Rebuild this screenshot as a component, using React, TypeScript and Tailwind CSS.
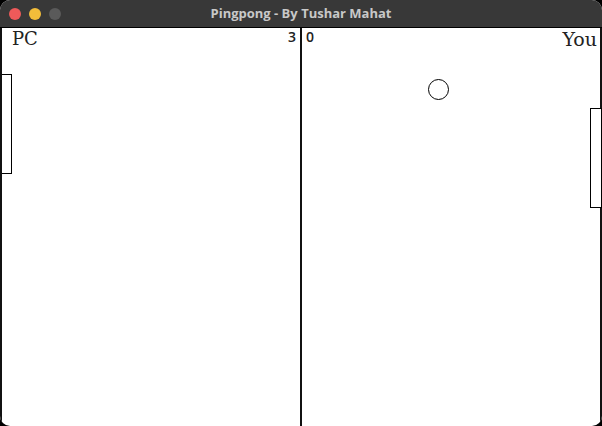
const serif = { fontFamily: '"DejaVu Serif", "Liberation Serif", serif' };
const sans = { fontFamily: '"Open Sans", "DejaVu Sans", sans-serif' };

export default function App() {
  return (
    <div className="w-[602px] h-[426px] bg-black">
      <div className="w-[602px] h-[426px] rounded-[10px] overflow-hidden flex flex-col bg-white">
        <div className="h-[28px] shrink-0 bg-[#383838] border-b border-black flex items-center px-[9px]">
          <div className="flex gap-[8px] w-[160px]">
            <div className="w-[12px] h-[12px] rounded-full bg-[#ee5a5a]" />
            <div className="w-[12px] h-[12px] rounded-full bg-[#f2bd3a]" />
            <div className="w-[12px] h-[12px] rounded-full bg-[#5a5a5a]" />
          </div>
          <span className="flex-1 text-center pr-[160px] text-[13px] font-bold text-[#c8c8c8]" style={sans}>
            Pingpong - By Tushar Mahat
          </span>
        </div>
        <div className="flex-1 flex">
          <div className="w-[302px] h-full border-l-[2px] border-r-[2px] border-[#111] relative overflow-hidden">
            <div className="flex justify-between items-start pl-[10px] pr-[4px]">
              <span className="text-[18px] text-[#222] leading-[22px]" style={serif}>PC</span>
              <span className="text-[14px] font-semibold text-[#222] leading-[18px]" style={sans}>3</span>
            </div>
            <div className="absolute left-[-2px] top-[46px] w-[12px] h-[100px] border border-black bg-white" />
          </div>
          <div className="flex-1 h-full border-r-[2px] border-[#111] relative">
            <div className="flex justify-between items-start pl-[4px] pr-[3px]">
              <span className="text-[14px] font-semibold text-[#222] leading-[18px]" style={sans}>0</span>
              <span className="text-[19px] text-[#222] leading-[22px]" style={serif}>You</span>
            </div>
            <div className="absolute left-[126px] top-[51px] w-[21px] h-[21px] rounded-full border border-black" />
            <div className="absolute right-[-2px] top-[80px] w-[12px] h-[100px] border border-black bg-white" />
          </div>
        </div>
      </div>
    </div>
  );
}
